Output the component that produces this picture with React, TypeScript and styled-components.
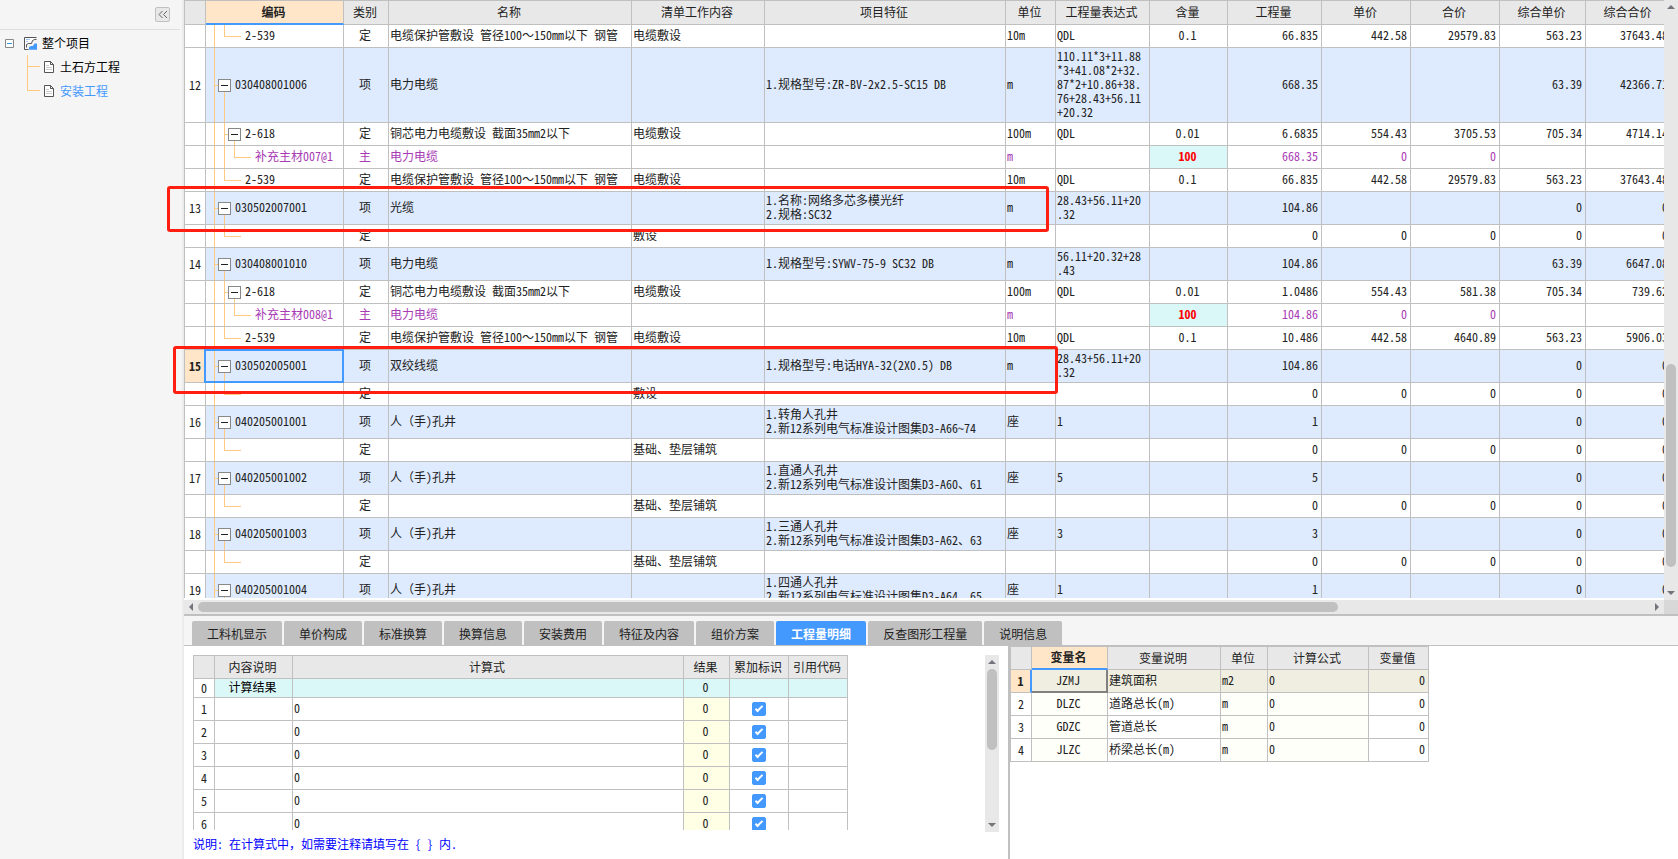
import React, { useState } from 'react';
import styled, { createGlobalStyle, css } from 'styled-components';

const color = {
  line: '#c0c0c0',
  head: '#e8e8e8',
  panel: '#f5f5f5',
  text: '#222222',
  blue: '#4499ff',
  item: '#deeafe',
  active: '#ffe6c8',
  tree: '#ffc982',
  purple: '#a83ab4',
  cyan: '#daf8f8',
  mark: '#ff1e10',
};

const Global = createGlobalStyle`
  *, *::before, *::after { box-sizing: border-box; }
  body { margin: 0; background: #ffffff; }
  body, button, input {
    font-family: "Noto Sans Mono CJK SC", "Noto Sans CJK SC", monospace;
    font-size: 12px;
    line-height: 14px;
    color: ${color.text};
  }
  button { margin: 0; padding: 0; border: 0; background: none; cursor: pointer; }
`;

const Page = styled.div`
  display: flex;
  height: 100vh;
  overflow: hidden;
`;

/* ---------- sidebar ---------- */

const Sidebar = styled.nav`
  flex: 0 0 184px;
  background: ${color.panel};
  border-right: 2px solid #ebebeb;
`;

const SidebarHead = styled.div`
  display: flex;
  justify-content: flex-end;
  align-items: center;
  height: 30px;
  margin-right: 2px;
  padding-right: 10px;
  border-bottom: 1px solid #dedede;
`;

const CollapseButton = styled.button`
  display: flex;
  align-items: center;
  justify-content: center;
  width: 15px;
  height: 15px;
  border: 1px solid ${color.line};
  border-radius: 2px;
  background: ${color.head};
`;

const RootItem = styled.button`
  display: flex;
  align-items: center;
  height: 24px;
  margin-top: 1px;
  padding-left: 5px;
  color: #000000;
  white-space: nowrap;
  svg { flex: none; }
  svg + svg { margin: 0 5px 0 10px; }
`;

const Branches = styled.ul`
  list-style: none;
  margin: 0;
  padding: 0 0 0 27px;
`;

const Branch = styled.li<{ $last?: boolean }>`
  display: flex;
  align-items: center;
  height: 24px;
  background:
    linear-gradient(${color.tree}, ${color.tree}) 0 0 / 1px ${p => (p.$last ? '12px' : '24px')} no-repeat,
    linear-gradient(${color.tree}, ${color.tree}) 0 11px / 13px 1px no-repeat;
`;

const BranchButton = styled.button<{ $selected?: boolean }>`
  display: flex;
  align-items: center;
  gap: 6px;
  padding-left: 17px;
  color: ${p => (p.$selected ? color.blue : '#000000')};
  white-space: nowrap;
`;

const DocIcon = () => (
  <svg width="10" height="12" viewBox="0 0 10 12" fill="none">
    <path d="M.5.5h6l3 3v8h-9z" fill="#fff" stroke="#555" />
    <path d="M6.5.5v3h3" stroke="#555" />
    <path d="M2 4.500h3M2 6.500h6M2 8.500h6" stroke="#ccc" />
  </svg>
);

/* ---------- workspace ---------- */

const Workspace = styled.main`
  flex: 1;
  min-width: 0;
  display: flex;
  flex-direction: column;
`;

const GridArea = styled.section`
  position: relative;
  flex: 1;
  min-height: 0;
  display: grid;
  grid-template-columns: minmax(0, 1fr) 14px;
  grid-template-rows: minmax(0, 1fr) 14px;
`;

const GridView = styled.div`
  overflow: hidden;
  margin-bottom: 2px;
`;

const Table = styled.table`
  table-layout: fixed;
  width: 1px;
  border-collapse: separate;
  border-spacing: 0;
  border-top: 1px solid ${color.line};
  border-left: 1px solid ${color.line};
`;

const HeadCell = styled.th<{ $active?: boolean; $h?: number }>`
  height: ${p => p.$h ?? 23}px;
  padding: 0 2px 1px 0;
  overflow: hidden;
  background: ${p => (p.$active ? color.active : color.head)};
  border-right: 1px solid ${color.line};
  border-bottom: ${p => (p.$active ? `2px solid ${color.blue}` : `1px solid ${color.line}`)};
  font-weight: ${p => (p.$active ? 700 : 400)};
  white-space: nowrap;
`;

type Align = 'left' | 'center' | 'right';

const Cell = styled.td<{ $align?: Align; $bg?: string; $color?: string; $strong?: boolean }>`
  padding: 0 3px 2px 1px;
  overflow: hidden;
  text-align: ${p => p.$align ?? 'left'};
  background: ${p => p.$bg ?? 'transparent'};
  color: ${p => p.$color ?? 'inherit'};
  font-weight: ${p => (p.$strong ? 700 : 400)};
  border-right: 1px solid ${color.line};
  border-bottom: 1px solid ${color.line};
  white-space: pre;
`;

const CheckCell = styled(Cell)`
  padding: 0;
`;

const IndexCell = styled.th<{ $active?: boolean }>`
  padding: 0;
  background: ${p => (p.$active ? color.active : '#ffffff')};
  font-weight: ${p => (p.$active ? 700 : 400)};
  border-right: 1px solid ${color.line};
  border-bottom: 1px solid ${color.line};
`;

const Row = styled.tr<{ $h: number; $item?: boolean; $purple?: boolean }>`
  height: ${p => p.$h}px;
  background: ${p => (p.$item ? color.item : '#ffffff')};
  color: ${p => (p.$purple ? color.purple : color.text)};
`;

const CodeCell = styled.td<{ $selected?: boolean }>`
  position: relative;
  padding: 0 0 0 8px;
  border-right: 1px solid ${color.line};
  border-bottom: 1px solid ${color.line};
  ${p => p.$selected && css`
    &::after {
      content: '';
      position: absolute;
      inset: -1px -1px -1px -2px;
      border: 2px solid ${color.blue};
      pointer-events: none;
    }
  `}
`;

const TreeLine = styled.div<{ $h: number }>`
  display: flex;
  height: ${p => p.$h}px;
  white-space: nowrap;
`;

const paint = `linear-gradient(${color.tree}, ${color.tree})`;

const Trunk = styled.span`
  flex: 0 0 10px;
  background: ${paint} 0 0 / 1px 100% no-repeat;
`;

const Tee = styled.span`
  flex: 0 0 4px;
  background: ${paint} 0 0 / 1px 100% no-repeat, ${paint} 0 50% / 4px 1px no-repeat;
`;

const Elbow = styled.span`
  flex: 0 0 17px;
  background: ${paint} 0 0 / 1px 50% no-repeat, ${paint} 0 50% / 17px 1px no-repeat;
`;

const Node = styled.span`
  flex: 0 0 13px;
  display: flex;
  align-items: center;
  background: ${paint} 6px 100% / 1px 50% no-repeat;
`;

const Toggle = styled.button`
  display: flex;
  align-items: center;
  justify-content: center;
  width: 13px;
  height: 13px;
  border: 1px solid #888888;
  background: #ffffff;
  &::before {
    content: '';
    width: 7px;
    height: 1px;
    background: #222222;
  }
`;

const Code = styled.span`
  align-self: center;
  padding: 0 0 2px 4px;
`;

/* ---------- scroll bars ---------- */

const ScrollTrack = styled.div<{ $row?: boolean }>`
  display: flex;
  flex-direction: ${p => (p.$row ? 'row' : 'column')};
  align-items: center;
  background: ${color.head};
`;

const ScrollLane = styled.div<{ $row?: boolean }>`
  flex: 1;
  display: flex;
  flex-direction: ${p => (p.$row ? 'row' : 'column')};
`;

const ScrollThumb = styled.div<{ $row?: boolean; $size: number }>`
  flex: ${p => p.$size} 0 0;
  ${p => (p.$row ? 'height' : 'width')}: 10px;
  border-radius: 5px;
  background: ${color.line};
`;

const Spacer = styled.div<{ $grow: number }>`
  flex: ${p => p.$grow} 0 0;
`;

const Corner = styled.div`
  background: #d8d8d8;
`;

const ArrowButton = styled.button`
  flex: 0 0 14px;
  width: 14px;
  height: 14px;
  display: flex;
  align-items: center;
  justify-content: center;
`;

const arrows = { up: 'M0 6l4-4 4 4z', down: 'M0 2l4 4 4-4z', left: 'M6 0L2 4l4 4z', right: 'M2 0l4 4-4 4z' };

const Arrow = ({ to, label }: { to: keyof typeof arrows; label: string }) => (
  <ArrowButton type="button" aria-label={label}>
    <svg width="8" height="8" viewBox="0 0 8 8"><path d={arrows[to]} fill="#73737c" /></svg>
  </ArrowButton>
);

const VerticalBar = ({ before, size, after }: { before: number; size: number; after: number }) => (
  <ScrollTrack>
    <Arrow to="up" label="向上滚动" />
    <ScrollLane>
      <Spacer $grow={before} />
      <ScrollThumb $size={size} />
      <Spacer $grow={after} />
    </ScrollLane>
    <Arrow to="down" label="向下滚动" />
  </ScrollTrack>
);

/* ---------- red annotation frames over the grid ---------- */

const Mark = styled.div<{ $x: number; $y: number; $w: number; $h: number }>`
  position: absolute;
  left: ${p => p.$x}px;
  top: ${p => p.$y}px;
  width: ${p => p.$w}px;
  height: ${p => p.$h}px;
  border: 3px solid ${color.mark};
  border-radius: 3px;
  pointer-events: none;
`;

/* ---------- lower pane ---------- */

const LowerPane = styled.section`
  flex: 0 0 245px;
  display: flex;
  flex-direction: column;
  border-top: 2px solid ${color.line};
`;

const Tabs = styled.div`
  display: flex;
  gap: 2px;
  padding: 5px 8px 0;
  background: ${color.panel};
  border-bottom: 1px solid ${color.line};
`;

const Tab = styled.button<{ $active?: boolean }>`
  height: 24px;
  padding: 1px 15px 0;
  border-radius: 2px 2px 0 0;
  background: ${p => (p.$active ? color.blue : color.line)};
  color: ${p => (p.$active ? '#ffffff' : color.text)};
  font-weight: ${p => (p.$active ? 700 : 400)};
  white-space: nowrap;
`;

const LowerBody = styled.div`
  flex: 1;
  min-height: 0;
  display: grid;
  grid-template-columns: minmax(0, 826fr) minmax(0, 668fr);
`;

const FormulaPane = styled.div`
  display: flex;
  flex-direction: column;
  min-height: 0;
  padding: 9px 9px 0;
  border-right: 2px solid ${color.line};
`;

const FormulaView = styled.div`
  display: flex;
  justify-content: space-between;
  height: 177px;
`;

const FormulaClip = styled.div`
  overflow: hidden;
  margin-bottom: 2px;
`;

const Note = styled.p`
  margin: 5px 0 0;
  color: #0000ff;
`;

const VariablePane = styled.div`
  overflow: hidden;
`;

const Check = styled.input`
  appearance: none;
  display: block;
  position: relative;
  width: 14px;
  height: 14px;
  margin: 0 auto;
  border: 1px solid ${color.blue};
  border-radius: 2px;
  background: #ffffff;
  &:checked { background: ${color.blue}; }
  &:checked::after {
    content: '';
    position: absolute;
    left: 4px;
    top: 1px;
    width: 4px;
    height: 8px;
    border: solid #ffffff;
    border-width: 0 2px 2px 0;
    transform: rotate(45deg);
  }
`;

const FocusNumber = styled(IndexCell)`
  border-right: 2px solid ${color.blue};
`;

const FocusCell = styled(Cell)`
  border-right: 2px solid #808080;
  border-bottom: 2px solid #808080;
`;

/* ---------- data ---------- */

type Kind = 'item' | 'group' | 'leaf' | 'material';

interface Line {
  no?: string;
  kind: Kind;
  code?: string;
  name?: string;
  work?: string;
  feature?: string;
  unit?: string;
  expr?: string;
  ratio?: string;
  nums: [string, string, string, string, string];
  h?: number;
  selected?: boolean;
}

const pipe = '电缆保护管敷设 管径100～150mm以下 钢管';
const core = '铜芯电力电缆敷设 截面35mm2以下';
const zeros: Line['nums'] = ['0', '0', '0', '0', '0'];

const manhole = (no: string, code: string, first: string, pages: string, qty: string): Line => ({
  no, kind: 'item', code, name: '人（手)孔井', unit: '座', expr: qty,
  feature: `1.${first}人孔井\n2.新12系列电气标准设计图集D3-${pages}`, nums: [qty, '', '', '0', '0'],
});
const bedding: Line = { kind: 'leaf', work: '基础、垫层铺筑', nums: zeros };

const lines: Line[] = [
  { kind: 'leaf', code: '2-539', name: pipe, work: '电缆敷设', unit: '10m', expr: 'QDL', ratio: '0.1', nums: ['66.835', '442.58', '29579.83', '563.23', '37643.48'] },
  { no: '12', kind: 'item', h: 75, code: '030408001006', name: '电力电缆', feature: '1.规格型号:ZR-BV-2x2.5-SC15 DB', unit: 'm', expr: '110.11*3+11.88\n*3+41.08*2+32.\n87*2+10.86+38.\n76+28.43+56.11\n+20.32', nums: ['668.35', '', '', '63.39', '42366.71'] },
  { kind: 'group', code: '2-618', name: core, work: '电缆敷设', unit: '100m', expr: 'QDL', ratio: '0.01', nums: ['6.6835', '554.43', '3705.53', '705.34', '4714.14'] },
  { kind: 'material', code: '补充主材007@1', name: '电力电缆', unit: 'm', ratio: '100', nums: ['668.35', '0', '0', '', ''] },
  { kind: 'leaf', code: '2-539', name: pipe, work: '电缆敷设', unit: '10m', expr: 'QDL', ratio: '0.1', nums: ['66.835', '442.58', '29579.83', '563.23', '37643.48'] },
  { no: '13', kind: 'item', code: '030502007001', name: '光缆', feature: '1.名称:网络多芯多模光纤\n2.规格:SC32', unit: 'm', expr: '28.43+56.11+20\n.32', nums: ['104.86', '', '', '0', '0'] },
  { kind: 'leaf', work: '敷设', nums: zeros },
  { no: '14', kind: 'item', code: '030408001010', name: '电力电缆', feature: '1.规格型号:SYWV-75-9 SC32 DB', unit: 'm', expr: '56.11+20.32+28\n.43', nums: ['104.86', '', '', '63.39', '6647.08'] },
  { kind: 'group', code: '2-618', name: core, work: '电缆敷设', unit: '100m', expr: 'QDL', ratio: '0.01', nums: ['1.0486', '554.43', '581.38', '705.34', '739.62'] },
  { kind: 'material', code: '补充主材008@1', name: '电力电缆', unit: 'm', ratio: '100', nums: ['104.86', '0', '0', '', ''] },
  { kind: 'leaf', code: '2-539', name: pipe, work: '电缆敷设', unit: '10m', expr: 'QDL', ratio: '0.1', nums: ['10.486', '442.58', '4640.89', '563.23', '5906.03'] },
  { no: '15', kind: 'item', selected: true, code: '030502005001', name: '双绞线缆', feature: '1.规格型号:电话HYA-32(2X0.5) DB', unit: 'm', expr: '28.43+56.11+20\n.32', nums: ['104.86', '', '', '0', '0'] },
  { kind: 'leaf', work: '敷设', nums: zeros },
  manhole('16', '040205001001', '转角', 'A66~74', '1'),
  bedding,
  manhole('17', '040205001002', '直通', 'A60、61', '5'),
  bedding,
  manhole('18', '040205001003', '三通', 'A62、63', '3'),
  bedding,
  manhole('19', '040205001004', '四通', 'A64、65', '1'),
];

const columns: [string, number][] = [
  ['', 21], ['编码', 138], ['类别', 45], ['名称', 243], ['清单工作内容', 133], ['项目特征', 241], ['单位', 50],
  ['工程量表达式', 94], ['含量', 78], ['工程量', 94], ['单价', 89], ['合价', 89], ['综合单价', 86], ['综合合价', 86],
];

const formulaColumns: [string, number][] = [
  ['', 21], ['内容说明', 78], ['计算式', 391], ['结果', 46], ['累加标识', 59], ['引用代码', 59],
];

const variableColumns: [string, number][] = [
  ['', 21], ['变量名', 76], ['变量说明', 113], ['单位', 47], ['计算公式', 101], ['变量值', 60],
];

const variables = [
  ['JZMJ', '建筑面积', 'm2'],
  ['DLZC', '道路总长(m)', 'm'],
  ['GDZC', '管道总长', 'm'],
  ['JLZC', '桥梁总长(m)', 'm'],
];

const tabs = ['工料机显示', '单价构成', '标准换算', '换算信息', '安装费用', '特征及内容', '组价方案', '工程量明细', '反查图形工程量', '说明信息'];

const kindLabel: Record<Kind, string> = { item: '项', group: '定', leaf: '定', material: '主' };

const Columns = ({ of, active, h }: { of: [string, number][]; active?: string; h?: number }) => (
  <>
    <colgroup>{of.map(([n, w]) => <col key={n} style={{ width: w }} />)}</colgroup>
    <thead>
      <tr>{of.map(([n]) => <HeadCell key={n} scope="col" $h={h} $active={!!active && n === active}>{n}</HeadCell>)}</tr>
    </thead>
  </>
);

const QuotaRow = ({ line }: { line: Line }) => {
  const item = line.kind === 'item';
  const h = line.h ?? (item ? 33 : 23);
  const material = line.kind === 'material';
  const node = <Node><Toggle type="button" aria-label={`折叠 ${line.code}`} /></Node>;
  return (
    <Row $h={h} $item={item} $purple={material}>
      <IndexCell scope="row" $active={line.selected}>{line.no}</IndexCell>
      <CodeCell $selected={line.selected}>
        <TreeLine $h={h - 1}>
          {item ? <><Tee />{node}</> : <Trunk />}
          {line.kind === 'group' && <><Tee />{node}</>}
          {line.kind === 'leaf' && <Elbow />}
          {material && <><Trunk /><Elbow /></>}
          <Code>{line.code}</Code>
        </TreeLine>
      </CodeCell>
      <Cell $align="center">{kindLabel[line.kind]}</Cell>
      <Cell>{line.name}</Cell>
      <Cell>{line.work}</Cell>
      <Cell>{line.feature}</Cell>
      <Cell>{line.unit}</Cell>
      <Cell>{line.expr}</Cell>
      <Cell $align="center" $strong={material} $bg={material ? color.cyan : undefined} $color={material ? '#ff0000' : undefined}>{line.ratio}</Cell>
      {line.nums.map((n, i) => <Cell key={i} $align="right">{n}</Cell>)}
    </Row>
  );
};

export default function App() {
  const [tab, setTab] = useState('工程量明细');
  return (
    <Page>
      <Global />
      <Sidebar aria-label="项目结构">
        <SidebarHead>
          <CollapseButton type="button" aria-label="收起">
            <svg width="10" height="9" viewBox="0 0 10 9" fill="none" stroke="#666"><path d="M4.500 1L1 4.500 4.500 8M9 1L5.500 4.500 9 8" /></svg>
          </CollapseButton>
        </SidebarHead>
        <RootItem type="button">
          <svg width="9" height="9" viewBox="0 0 9 9" fill="none"><path d="M.5.5h8v8h-8z" fill="#fff" stroke="#888" /><path d="M2 4.500h5" stroke="#2f9bd8" /></svg>
          <svg width="13" height="13" viewBox="0 0 13 13" fill="none">
            <path d="M.5.5h10l-3 4.500-5 1v6.500H.5z" fill="#fff" />
            <path d="M2 2.500h4M2 4.500h2" stroke="#9ccaff" />
            <path d="M4.500 12.500h-4V.5h12" stroke="#555" />
            <path d="M2.500 10.500V7.500l2-1h3l1-3 2-1h2" stroke="#555" />
            <path d="M5 12.800V10l2-1h2l1.500-2.500H13v6.300z" fill="#4499ff" />
          </svg>
          整个项目
        </RootItem>
        <Branches>
          <Branch><BranchButton type="button"><DocIcon />土石方工程</BranchButton></Branch>
          <Branch $last><BranchButton type="button" $selected><DocIcon />安装工程</BranchButton></Branch>
        </Branches>
      </Sidebar>

      <Workspace>
        <GridArea>
          <GridView>
            <Table>
              <Columns of={columns} active="编码" h={24} />
              <tbody>{lines.map((l, i) => <QuotaRow key={i} line={l} />)}</tbody>
            </Table>
          </GridView>
          <VerticalBar before={350} size={203} after={19} />
          <ScrollTrack $row>
            <Arrow to="left" label="向左滚动" />
            <ScrollLane $row><ScrollThumb $row $size={1140} /><Spacer $grow={312} /></ScrollLane>
            <Arrow to="right" label="向右滚动" />
          </ScrollTrack>
          <Corner />
          <Mark $x={-17} $y={186} $w={882} $h={46} />
          <Mark $x={-11} $y={346} $w={885} $h={48} />
        </GridArea>

        <LowerPane>
          <Tabs role="tablist">
            {tabs.map(t => (
              <Tab key={t} type="button" role="tab" aria-selected={t === tab} $active={t === tab} onClick={() => setTab(t)}>{t}</Tab>
            ))}
          </Tabs>
          <LowerBody>
            <FormulaPane>
              <FormulaView>
                <FormulaClip>
                  <Table>
                    <Columns of={formulaColumns} />
                    <tbody>
                      <Row $h={19}>
                        <IndexCell scope="row">0</IndexCell>
                        <Cell $align="center" $bg={color.cyan} $color="#000000">计算结果</Cell>
                        <Cell $bg={color.cyan} />
                        <Cell $align="center" $bg={color.cyan}>0</Cell>
                        <Cell $bg={color.cyan} />
                        <Cell $bg={color.cyan} />
                      </Row>
                      {[1, 2, 3, 4, 5, 6].map(n => (
                        <Row key={n} $h={23}>
                          <IndexCell scope="row">{n}</IndexCell>
                          <Cell />
                          <Cell>0</Cell>
                          <Cell $align="center" $bg="#ffffe6">0</Cell>
                          <CheckCell><Check type="checkbox" defaultChecked aria-label={`累加标识 ${n}`} /></CheckCell>
                          <Cell />
                        </Row>
                      ))}
                    </tbody>
                  </Table>
                </FormulaClip>
                <VerticalBar before={0} size={81} after={68} />
              </FormulaView>
              <Note>说明: 在计算式中，如需要注释请填写在 {'{ }'} 内.</Note>
            </FormulaPane>
            <VariablePane>
              <Table>
                <Columns of={variableColumns} active="变量名" />
                <tbody>
                  {variables.map(([name, desc, unit], i) => {
                    const first = i === 0;
                    const Num = first ? FocusNumber : IndexCell;
                    const Name = first ? FocusCell : Cell;
                    const tint = first ? '#efeee0' : '#fffffa';
                    return (
                      <Row key={name} $h={23}>
                        <Num scope="row" $active={first}>{i + 1}</Num>
                        <Name $align="center" $bg={tint}>{name}</Name>
                        <Cell $bg={first ? tint : undefined}>{desc}</Cell>
                        <Cell $bg={tint}>{unit}</Cell>
                        <Cell $bg={tint}>0</Cell>
                        <Cell $align="right" $bg={first ? tint : undefined}>0</Cell>
                      </Row>
                    );
                  })}
                </tbody>
              </Table>
            </VariablePane>
          </LowerBody>
        </LowerPane>
      </Workspace>
    </Page>
  );
}
